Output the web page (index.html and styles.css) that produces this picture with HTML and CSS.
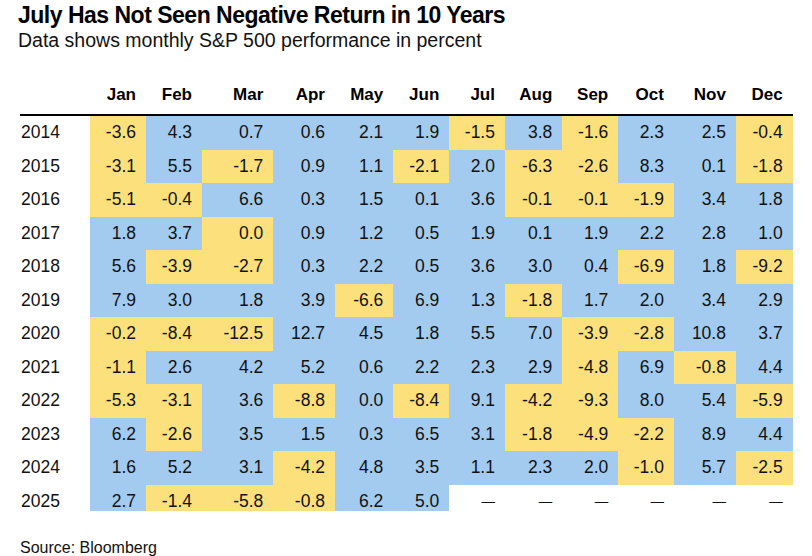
FILE: index.html
```html
<!DOCTYPE html>
<html lang="en">
<head>
<meta charset="utf-8">
<title>July Has Not Seen Negative Return in 10 Years</title>
<link rel="stylesheet" href="styles.css">
</head>
<body>
<div class="chart">
  <h1 class="title">July Has Not Seen Negative Return in 10 Years</h1>
  <p class="subtitle">Data shows monthly S&amp;P 500 performance in percent</p>
  <div class="grid">
    <div class="hd yr"></div><div class="hd">Jan</div><div class="hd">Feb</div><div class="hd">Mar</div><div class="hd">Apr</div><div class="hd">May</div><div class="hd">Jun</div><div class="hd">Jul</div><div class="hd">Aug</div><div class="hd">Sep</div><div class="hd">Oct</div><div class="hd">Nov</div><div class="hd">Dec</div>

    <div class="yr">2014</div><div class="c n">-3.6</div><div class="c p">4.3</div><div class="c p">0.7</div><div class="c p">0.6</div><div class="c p">2.1</div><div class="c p">1.9</div><div class="c n">-1.5</div><div class="c p">3.8</div><div class="c n">-1.6</div><div class="c p">2.3</div><div class="c p">2.5</div><div class="c n">-0.4</div>

    <div class="yr">2015</div><div class="c n">-3.1</div><div class="c p">5.5</div><div class="c n">-1.7</div><div class="c p">0.9</div><div class="c p">1.1</div><div class="c n">-2.1</div><div class="c p">2.0</div><div class="c n">-6.3</div><div class="c n">-2.6</div><div class="c p">8.3</div><div class="c p">0.1</div><div class="c n">-1.8</div>

    <div class="yr">2016</div><div class="c n">-5.1</div><div class="c n">-0.4</div><div class="c p">6.6</div><div class="c p">0.3</div><div class="c p">1.5</div><div class="c p">0.1</div><div class="c p">3.6</div><div class="c n">-0.1</div><div class="c n">-0.1</div><div class="c n">-1.9</div><div class="c p">3.4</div><div class="c p">1.8</div>

    <div class="yr">2017</div><div class="c p">1.8</div><div class="c p">3.7</div><div class="c n">0.0</div><div class="c p">0.9</div><div class="c p">1.2</div><div class="c p">0.5</div><div class="c p">1.9</div><div class="c p">0.1</div><div class="c p">1.9</div><div class="c p">2.2</div><div class="c p">2.8</div><div class="c p">1.0</div>

    <div class="yr">2018</div><div class="c p">5.6</div><div class="c n">-3.9</div><div class="c n">-2.7</div><div class="c p">0.3</div><div class="c p">2.2</div><div class="c p">0.5</div><div class="c p">3.6</div><div class="c p">3.0</div><div class="c p">0.4</div><div class="c n">-6.9</div><div class="c p">1.8</div><div class="c n">-9.2</div>

    <div class="yr">2019</div><div class="c p">7.9</div><div class="c p">3.0</div><div class="c p">1.8</div><div class="c p">3.9</div><div class="c n">-6.6</div><div class="c p">6.9</div><div class="c p">1.3</div><div class="c n">-1.8</div><div class="c p">1.7</div><div class="c p">2.0</div><div class="c p">3.4</div><div class="c p">2.9</div>

    <div class="yr">2020</div><div class="c n">-0.2</div><div class="c n">-8.4</div><div class="c n">-12.5</div><div class="c p">12.7</div><div class="c p">4.5</div><div class="c p">1.8</div><div class="c p">5.5</div><div class="c p">7.0</div><div class="c n">-3.9</div><div class="c n">-2.8</div><div class="c p">10.8</div><div class="c p">3.7</div>

    <div class="yr">2021</div><div class="c n">-1.1</div><div class="c p">2.6</div><div class="c p">4.2</div><div class="c p">5.2</div><div class="c p">0.6</div><div class="c p">2.2</div><div class="c p">2.3</div><div class="c p">2.9</div><div class="c n">-4.8</div><div class="c p">6.9</div><div class="c n">-0.8</div><div class="c p">4.4</div>

    <div class="yr">2022</div><div class="c n">-5.3</div><div class="c n">-3.1</div><div class="c p">3.6</div><div class="c n">-8.8</div><div class="c p">0.0</div><div class="c n">-8.4</div><div class="c p">9.1</div><div class="c n">-4.2</div><div class="c n">-9.3</div><div class="c p">8.0</div><div class="c p">5.4</div><div class="c n">-5.9</div>

    <div class="yr">2023</div><div class="c p">6.2</div><div class="c n">-2.6</div><div class="c p">3.5</div><div class="c p">1.5</div><div class="c p">0.3</div><div class="c p">6.5</div><div class="c p">3.1</div><div class="c n">-1.8</div><div class="c n">-4.9</div><div class="c n">-2.2</div><div class="c p">8.9</div><div class="c p">4.4</div>

    <div class="yr">2024</div><div class="c p">1.6</div><div class="c p">5.2</div><div class="c p">3.1</div><div class="c n">-4.2</div><div class="c p">4.8</div><div class="c p">3.5</div><div class="c p">1.1</div><div class="c p">2.3</div><div class="c p">2.0</div><div class="c n">-1.0</div><div class="c p">5.7</div><div class="c n">-2.5</div>

    <div class="yr last">2025</div><div class="c p last">2.7</div><div class="c n last">-1.4</div><div class="c n last">-5.8</div><div class="c n last">-0.8</div><div class="c p last">6.2</div><div class="c p last">5.0</div><div class="c last"><span class="dash">—</span></div><div class="c last"><span class="dash">—</span></div><div class="c last"><span class="dash">—</span></div><div class="c last"><span class="dash">—</span></div><div class="c last"><span class="dash">—</span></div><div class="c last"><span class="dash">—</span></div>
  </div>
  <p class="source">Source: Bloomberg</p>
</div>
</body>
</html>
```

FILE: styles.css
```css
html, body {
  margin: 0;
  padding: 0;
  background: #ffffff;
}

body {
  font-family: "Liberation Sans", Arial, sans-serif;
  color: #111111;
}

.chart {
  padding: 3px 19px 0 18px;
}

.title {
  margin: 0;
  font-size: 23px;
  line-height: 25.5px;
  font-weight: bold;
  color: #000000;
  letter-spacing: -0.5px;
}

.subtitle {
  margin: 0;
  font-size: 19.5px;
  line-height: 22px;
  color: #111111;
}

.grid {
  margin: 29.5px 0 0 2px;
  display: grid;
  grid-template-columns: 70px 56px 56px 71.3px 61.7px 58.3px 56px 55.7px 57.3px 56px 55.7px 62px 56.7px;
  grid-auto-rows: 33.5px;
  grid-template-rows: 36px;
  font-size: 17.5px;
}

.grid > div {
  line-height: 33.5px;
  white-space: nowrap;
}

.grid > .hd {
  height: 34px;
  line-height: 30px;
  font-size: 17px;
  font-weight: bold;
  color: #000000;
  text-align: right;
  padding-right: 10px;
  border-bottom: 2px solid #000000;
}

.grid > .hd.yr {
  padding-right: 0;
}

.yr {
  text-align: left;
  padding-left: 1px;
}

.c {
  text-align: right;
  padding-right: 10px;
}

.n {
  background: #fbe07c;
}

.p {
  background: #a3cbef;
}

.grid > .last {
  height: 26.5px;
}

.dash {
  font-size: 13.5px;
  vertical-align: 2px;
}

.source {
  margin: 20.5px 0 0 2px;
  font-size: 16px;
  line-height: 18px;
  color: #111111;
}
```
